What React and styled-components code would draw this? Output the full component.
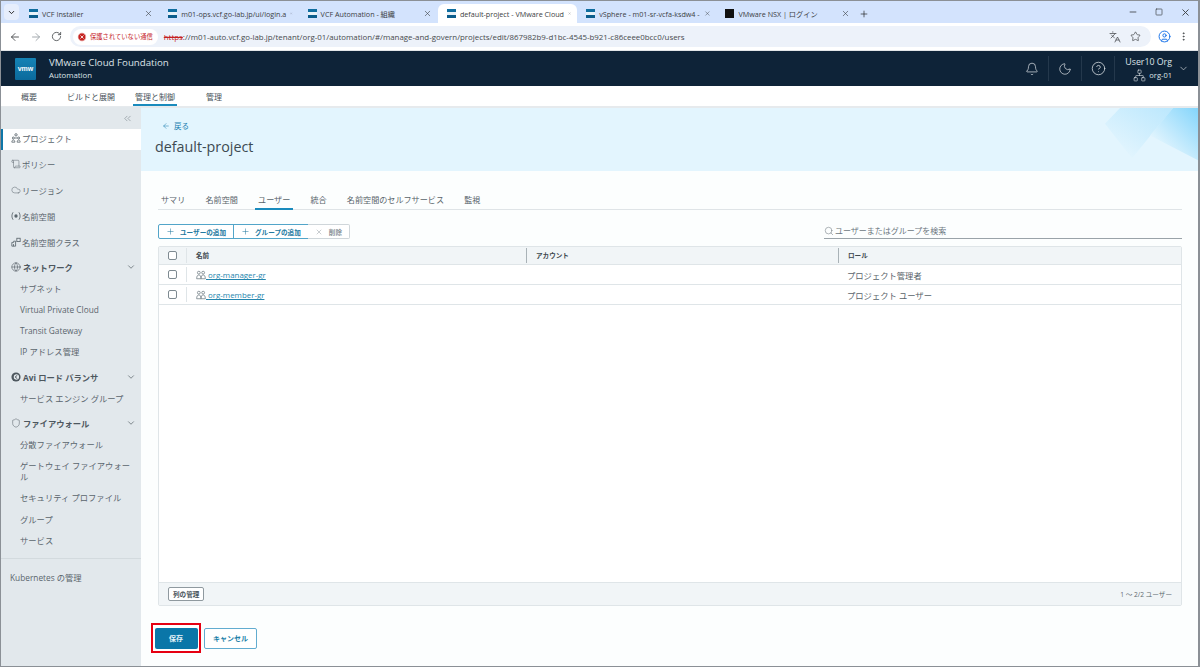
import React from 'react'
import styled, { createGlobalStyle } from 'styled-components'
import {
  ArrowLeft,
  ArrowRight,
  Bell,
  ChevronDown,
  ChevronsLeft,
  CircleHelp,
  CircleX,
  Cloud,
  Globe,
  Languages,
  Minus,
  MoreVertical,
  Moon,
  Network,
  Plus,
  RotateCw,
  Scroll,
  Search,
  Shield,
  Square,
  Star,
  UserCircle,
  X
} from 'lucide-react'

const FONT = '"Open Sans", "Noto Sans CJK JP", sans-serif'

const GlobalStyle = createGlobalStyle`
  html, body {
    margin: 0;
    height: 100%;
    overflow: hidden;
  }
  body {
    font-family: ${FONT};
    color: #454f55;
  }
  #root {
    height: 100%;
  }
  * {
    box-sizing: border-box;
  }
`

// small clarity-style icons that the packages don't have
const PeopleIcon = ({ size = 10 }) => (
  <svg width={size} height={size} viewBox="0 0 12 12" fill="none" stroke="#7a858c" strokeWidth="1">
    <circle cx="3.4" cy="3.2" r="1.7" />
    <circle cx="8.6" cy="3.2" r="1.7" />
    <path d="M0.8 10.5c0-3 1-4.6 2.6-4.6s2.6 1.6 2.6 4.6zM6 10.5c0-3 1-4.6 2.6-4.6s2.6 1.6 2.6 4.6z" />
  </svg>
)

const ProjectIcon = () => (
  <svg width="10" height="10" viewBox="0 0 12 12" fill="none" stroke="currentColor" strokeWidth="1">
    <circle cx="6" cy="2.2" r="1.4" />
    <circle cx="2.8" cy="6" r="1.2" />
    <circle cx="9.2" cy="6" r="1.2" />
    <path d="M4 6h4M1 11c0-1.6.7-2.6 1.8-2.6S4.600 9.400 4.600 11zM7.400 11c0-1.600.7-2.600 1.800-2.600S11 9.400 11 11z" />
  </svg>
)

const NamespaceIcon = () => (
  <svg width="10" height="10" viewBox="0 0 12 12" fill="none" stroke="currentColor" strokeWidth="1">
    <path d="M2.500 1.500C.6 4 .6 8 2.500 10.500M9.500 1.500c1.900 2.500 1.900 6.500 0 9" />
    <circle cx="6" cy="6" r="2" fill="currentColor" strokeWidth="0" />
  </svg>
)

const NamespaceClassIcon = () => (
  <svg width="10" height="10" viewBox="0 0 12 12" fill="none" stroke="currentColor" strokeWidth="1">
    <path d="M1 11V6.500h2.200V5h2.300v6zM3 8.500V11" />
    <rect x="7" y="1.500" width="4" height="4" />
  </svg>
)

const AviIcon = () => (
  <svg width="10" height="10" viewBox="0 0 12 12">
    <circle cx="6" cy="6" r="5.500" fill="currentColor" />
    <circle cx="6.500" cy="6" r="3.200" fill="#e2e8ec" />
    <path d="M7.500 4 5 6l2.500 2" fill="none" stroke="currentColor" strokeWidth="1.200" />
  </svg>
)

const tabs = [
  { id: 1, title: 'VCF Installer' },
  { id: 2, title: 'm01-ops.vcf.go-lab.jp/ui/login.a' },
  { id: 3, title: 'VCF Automation - 組織' },
  { id: 4, title: 'default-project - VMware Cloud', active: true },
  { id: 5, title: 'vSphere - m01-sr-vcfa-ksdw4 -' },
  { id: 6, title: 'VMware NSX | ログイン', dark: true }
]

const navItems = [
  { label: '概要', gap: 26 },
  { label: 'ビルドと展開', gap: 16 },
  { label: '管理と制御', gap: 27, active: true },
  { label: '管理', gap: 0 }
]

const sideItems = [
  { label: 'ポリシー', icon: <Scroll size={10} strokeWidth={1.2} /> },
  { label: 'リージョン', icon: <Cloud size={10} strokeWidth={1.2} /> },
  { label: '名前空間', icon: <NamespaceIcon /> },
  { label: '名前空間クラス', icon: <NamespaceClassIcon /> }
]

const sideGroups = [
  {
    label: 'ネットワーク',
    icon: <Globe size={10} strokeWidth={1.4} />,
    children: ['サブネット', 'Virtual Private Cloud', 'Transit Gateway', 'IP アドレス管理']
  },
  { label: 'Avi ロード バランサ', icon: <AviIcon />, children: ['サービス エンジン グループ'] },
  {
    label: 'ファイアウォール',
    icon: <Shield size={10} strokeWidth={1.2} />,
    children: ['分散ファイアウォール', 'ゲートウェイ ファイアウォール', 'セキュリティ プロファイル', 'グループ', 'サービス']
  }
]

const projectTabs = ['サマリ', '名前空間', 'ユーザー', '統合', '名前空間のセルフサービス', '監視']

const rows = [
  { id: 1, name: 'org-manager-gr', role: 'プロジェクト管理者' },
  { id: 2, name: 'org-member-gr', role: 'プロジェクト ユーザー' }
]

const App = () => (
  <Page>
    <GlobalStyle />
    <TabStrip>
      <TabMenu>
        <ChevronDown size={9} strokeWidth={2.5} />
      </TabMenu>
      {tabs.map(({ id, title, active, dark }) => (
        <BrowserTab key={id} $active={active}>
          <Favicon $dark={dark} />
          <TabTitle>{title}</TabTitle>
          <X size={9} strokeWidth={1.6} />
        </BrowserTab>
      ))}
      <NewTab>
        <Plus size={10} strokeWidth={1.6} />
      </NewTab>
      <WindowButtons>
        <Minus size={10} />
        <Square size={8} />
        <X size={11} />
      </WindowButtons>
    </TabStrip>

    <AddressRow>
      <NavIcons>
        <ArrowLeft size={12} strokeWidth={1.8} />
        <ArrowRight size={12} strokeWidth={1.8} color="#9aa0a6" />
        <RotateCw size={11} strokeWidth={1.8} />
      </NavIcons>
      <Omnibox>
        <Insecure>
          <CircleX size={10} strokeWidth={2} color="#fff" fill="#c5221f" />
          保護されていない通信
        </Insecure>
        <Url>
          <s>https</s>://m01-auto.vcf.go-lab.jp/tenant/org-01/automation/#/manage-and-govern/projects/edit/867982b9-d1bc-4545-b921-c86ceee0bcc0/users
        </Url>
        <Languages size={12} strokeWidth={1.5} />
        <Star size={11} strokeWidth={1.6} />
      </Omnibox>
      <UserCircle size={13} color="#1a73e8" strokeWidth={1.8} />
      <MoreVertical size={11} />
    </AddressRow>

    <Header>
      <VmwLogo>vmw</VmwLogo>
      <Brand>
        <BrandTitle>VMware Cloud Foundation</BrandTitle>
        <BrandSub>Automation</BrandSub>
      </Brand>
      <HeaderActions>
        <HeaderIcon>
          <Bell size={14} strokeWidth={1.2} />
        </HeaderIcon>
        <HeaderIcon>
          <Moon size={14} strokeWidth={1.2} />
        </HeaderIcon>
        <HeaderIcon>
          <CircleHelp size={15} strokeWidth={1.2} />
        </HeaderIcon>
        <UserBlock>
          <UserName>User10 Org</UserName>
          <UserOrg>
            <Network size={13} strokeWidth={1.1} />
            org-01
          </UserOrg>
        </UserBlock>
        <ChevronDown size={11} strokeWidth={1.4} />
      </HeaderActions>
    </Header>

    <SubNav>
      {navItems.map(({ label, gap, active }) => (
        <SubNavItem key={label} $active={active} $gap={gap}>
          {label}
        </SubNavItem>
      ))}
    </SubNav>

    <Body>
      <Sidebar>
        <Collapse>
          <ChevronsLeft size={11} strokeWidth={1.2} />
        </Collapse>
        <SideLink $active>
          <ProjectIcon />
          プロジェクト
        </SideLink>
        {sideItems.map(({ label, icon }) => (
          <SideLink key={label}>
            {icon}
            {label}
          </SideLink>
        ))}
        {sideGroups.map(({ label, icon, children }) => (
          <SideGroup key={label}>
            <GroupHead>
              {icon}
              <span>{label}</span>
              <ChevronDown size={10} strokeWidth={1.6} />
            </GroupHead>
            {children.map(child => (
              <SideChild key={child}>{child}</SideChild>
            ))}
          </SideGroup>
        ))}
        <SideFooter>Kubernetes の管理</SideFooter>
      </Sidebar>

      <Main>
        <Banner>
          <BannerArt viewBox="0 0 93 64" preserveAspectRatio="none" aria-hidden="true">
            <defs>
              <linearGradient id="artA" x1="0.15" y1="0.85" x2="0.9" y2="0">
                <stop offset="0" stopColor="#e3f5fe" />
                <stop offset="1" stopColor="#bde8fd" />
              </linearGradient>
              <linearGradient id="artB" x1="0.25" y1="0.8" x2="1" y2="0">
                <stop offset="0" stopColor="#e3f5fe" />
                <stop offset="1" stopColor="#84d5fb" />
              </linearGradient>
            </defs>
            <polygon points="0,16 15,0 68,0 27,51" fill="url(#artA)" />
            <polygon points="45,28 68,0 93,0 93,53" fill="url(#artB)" />
          </BannerArt>
          <BackLink>
            <ArrowLeft size={8} strokeWidth={1.6} />
            戻る
          </BackLink>
          <PageTitle>default-project</PageTitle>
        </Banner>

        <Content>
          <TabRow>
            {projectTabs.map(tab => (
              <ProjectTab key={tab} $active={tab === 'ユーザー'}>
                {tab}
              </ProjectTab>
            ))}
          </TabRow>

          <Toolbar>
            <ButtonGroup>
              <ToolButton>
                <Plus size={9} strokeWidth={1.4} />
                ユーザーの追加
              </ToolButton>
              <ToolButton>
                <Plus size={9} strokeWidth={1.4} />
                グループの追加
              </ToolButton>
              <ToolButton $disabled>
                <X size={8} strokeWidth={1.4} />
                削除
              </ToolButton>
            </ButtonGroup>
            <SearchBox>
              <Search size={10} strokeWidth={1.3} />
              ユーザーまたはグループを検索
            </SearchBox>
          </Toolbar>

          <Grid>
            <GridHead>
              <CheckCell>
                <CheckBox />
              </CheckCell>
              <NameCell $head>名前</NameCell>
              <AccountCell $head>アカウント</AccountCell>
              <RoleCell $head>ロール</RoleCell>
            </GridHead>
            {rows.map(({ id, name, role }) => (
              <GridRow key={id}>
                <CheckCell>
                  <CheckBox />
                </CheckCell>
                <NameCell>
                  <PeopleIcon />
                  <NameLink>&nbsp;{name}</NameLink>
                </NameCell>
                <AccountCell />
                <RoleCell>{role}</RoleCell>
              </GridRow>
            ))}
            <GridFiller />
            <GridFoot>
              <ColumnButton>列の管理</ColumnButton>
              <Count>1 ～ 2/2 ユーザー</Count>
            </GridFoot>
          </Grid>

          <Actions>
            <SaveHighlight>
              <SaveButton>保存</SaveButton>
            </SaveHighlight>
            <CancelButton>キャンセル</CancelButton>
          </Actions>
        </Content>
      </Main>
    </Body>
  </Page>
)

const Page = styled.div`
  display: flex;
  flex-direction: column;
  width: 1200px;
  height: 667px;
  overflow: hidden;
  background: #fff;
  border: 1px solid #8b9096;
  border-right-width: 2px;
`

const TabStrip = styled.div`
  display: flex;
  align-items: flex-end;
  height: 22px;
  flex: none;
  background: #d3e3fd;
  padding-left: 3px;
`

const TabMenu = styled.div`
  display: flex;
  align-items: center;
  justify-content: center;
  width: 15px;
  height: 16px;
  margin: 0 1px 3px 0;
  border-radius: 4px;
  background: #e6eefc;
  color: #1f1f1f;
`

const BrowserTab = styled.div`
  display: flex;
  align-items: center;
  gap: 4px;
  width: 139.3px;
  height: 19px;
  padding: 0 6px 0 9px;
  border-radius: 6px 6px 0 0;
  background: ${p => (p.$active ? '#fff' : 'transparent')};
  color: #3c4043;
`

const Favicon = styled.span`
  flex: none;
  width: 9px;
  height: 9px;
  background: ${p => (p.$dark ? '#111' : 'linear-gradient(#0f6d9f, #0f6d9f 30%, #e8f2f8 30%, #e8f2f8 62%, #0b5d8c 62%)')};
`

const TabTitle = styled.span`
  flex: 1;
  font-size: 7.2px;
  white-space: nowrap;
`

const NewTab = styled.div`
  display: flex;
  align-items: center;
  justify-content: center;
  width: 16px;
  height: 19px;
  color: #1f1f1f;
`

const WindowButtons = styled.div`
  display: flex;
  align-items: center;
  gap: 17px;
  height: 22px;
  margin-left: auto;
  padding-right: 7px;
  color: #3c4043;
`

const AddressRow = styled.div`
  display: flex;
  align-items: center;
  flex: none;
  height: 28px;
  padding: 0 9px 0 8px;
  gap: 7px;
  background: #fff;
  color: #474a4d;
  border-bottom: 1px solid #e2e5e8;
`

const NavIcons = styled.div`
  display: flex;
  align-items: center;
  gap: 9px;
  margin-right: 1px;
`

const Omnibox = styled.div`
  display: flex;
  align-items: center;
  flex: 1;
  height: 21px;
  padding: 0 10px 0 3px;
  gap: 9px;
  border-radius: 11px;
  background: #edf2fa;
`

const Insecure = styled.div`
  display: flex;
  align-items: center;
  gap: 3px;
  height: 16px;
  padding: 0 5px 0 4px;
  border-radius: 8px;
  background: #fff;
  color: #c5221f;
  font-size: 6.3px;
  white-space: nowrap;
`

const Url = styled.div`
  flex: 1;
  margin-left: -3px;
  font-size: 7.9px;
  color: #474a4d;
  white-space: nowrap;
  s {
    color: #c5221f;
  }
`

const Header = styled.header`
  display: flex;
  align-items: center;
  flex: none;
  height: 35px;
  padding: 0 9px 0 14px;
  background: #0e2338;
  color: #dfe4e8;
`

const VmwLogo = styled.div`
  display: flex;
  align-items: center;
  justify-content: center;
  width: 21px;
  height: 22px;
  margin-right: 13px;
  border-radius: 1px;
  background: linear-gradient(#1583b5, #0b6a9c);
  color: #fff;
  font-family: "Liberation Sans", sans-serif;
  font-size: 7px;
  font-weight: 700;
`

const Brand = styled.div`
  display: flex;
  flex-direction: column;
  margin-top: -1px;
`

const BrandTitle = styled.div`
  font-size: 9.7px;
  line-height: 14px;
`

const BrandSub = styled.div`
  font-size: 7.8px;
  line-height: 10px;
`

const HeaderActions = styled.div`
  display: flex;
  align-items: center;
  margin-left: auto;
`

const HeaderIcon = styled.div`
  display: flex;
  align-items: center;
  justify-content: center;
  width: 33px;
  height: 25px;
  border-right: 1px solid #24384c;
`

const UserBlock = styled.div`
  display: flex;
  flex-direction: column;
  align-items: flex-end;
  width: 57px;
  margin-right: 6px;
`

const UserName = styled.div`
  font-size: 8.8px;
  line-height: 13px;
`

const UserOrg = styled.div`
  display: flex;
  align-items: center;
  gap: 3px;
  font-size: 7.5px;
  line-height: 13px;
`

const SubNav = styled.nav`
  display: flex;
  flex: none;
  height: 21px;
  padding-left: 18px;
  background: #fff;
  border-bottom: 1px solid #e6eaed;
`

const SubNavItem = styled.div`
  display: flex;
  align-items: center;
  padding: 2px 2px 0;
  margin-right: ${p => p.$gap}px;
  font-size: 8px;
  color: #48525a;
  border-bottom: 2px solid ${p => (p.$active ? '#1a8bbd' : 'transparent')};
`

const Body = styled.div`
  display: flex;
  flex: 1;
  min-height: 0;
`

const Sidebar = styled.aside`
  display: flex;
  flex-direction: column;
  flex: none;
  width: 140px;
  background: #e2e8ec;
  font-size: 8.3px;
  color: #5a656c;
`

const Collapse = styled.div`
  display: flex;
  justify-content: flex-end;
  height: 22px;
  padding: 6px 8px 0 0;
  color: #6f7a82;
`

const SideLink = styled.div`
  display: flex;
  align-items: center;
  gap: 1px;
  height: ${p => (p.$active ? '21px' : '20px')};
  margin-bottom: ${p => (p.$active ? '4px' : '6px')};
  padding-left: ${p => (p.$active ? '8px' : '10px')};
  padding-bottom: ${p => (p.$active ? '3px' : '0')};
  background: ${p => (p.$active ? '#fff' : 'transparent')};
  border-left: ${p => (p.$active ? '2px solid #0e76a8' : 'none')};
`

const SideGroup = styled.div`
  display: flex;
  flex-direction: column;
  margin-bottom: 4px;
  ${SideLink} + & {
    margin-top: -1.5px;
  }
`

const GroupHead = styled.div`
  display: flex;
  align-items: center;
  gap: 2px;
  height: 21px;
  padding: 0 5px 0 10px;
  font-weight: 700;
  color: #4d575e;
  span {
    flex: 1;
  }
`

const SideChild = styled.div`
  min-height: 21.3px;
  padding: 5px 8px 5px 19px;
  line-height: 11px;
`

const SideFooter = styled.div`
  margin-top: 3px;
  padding: 11px 0 0 9px;
  border-top: 1px solid #d3dade;
  line-height: 16px;
`

const Main = styled.main`
  display: flex;
  flex-direction: column;
  flex: 1;
  min-width: 0;
`

const Banner = styled.section`
  position: relative;
  flex: none;
  height: 64px;
  padding: 12px 0 0 14px;
  background: #e3f5fe;
  border-top: 1px solid #e6eaed;
`

const BannerArt = styled.svg`
  position: absolute;
  top: 0;
  right: 0;
  width: 93px;
  height: 63px;
`

const BackLink = styled.div`
  display: flex;
  align-items: center;
  gap: 4px;
  height: 11px;
  margin-left: 7px;
  font-size: 7.5px;
  color: #1a7fb0;
`

const PageTitle = styled.h1`
  margin: 6px 0 0;
  font-size: 14.3px;
  font-weight: 400;
  line-height: 20px;
  color: #3d4a52;
`

const Content = styled.div`
  display: flex;
  flex-direction: column;
  flex: 1;
  min-height: 0;
  padding: 22px 16px 13px 17px;
  background: #fcfefe;
`

const TabRow = styled.div`
  display: flex;
  flex: none;
  height: 17px;
  gap: 14.2px;
  border-bottom: 1px solid #dfe4e7;
`

const ProjectTab = styled.div`
  height: 17px;
  padding: 0 3px;
  font-size: 8.1px;
  line-height: 14px;
  color: #58636a;
  border-bottom: 2px solid ${p => (p.$active ? '#1a8bbd' : 'transparent')};
`

const Toolbar = styled.div`
  display: flex;
  flex: none;
  justify-content: space-between;
  height: 15px;
  margin-top: 14px;
`

const ButtonGroup = styled.div`
  display: flex;
`

const ToolButton = styled.button`
  display: flex;
  align-items: center;
  gap: ${p => (p.$disabled ? '6px' : '5px')};
  height: 15px;
  padding: 0 7px;
  margin-left: -1px;
  background: #fff;
  font-family: ${FONT};
  font-size: 6.6px;
  font-weight: 700;
  color: ${p => (p.$disabled ? '#8c959b' : '#23799f')};
  border: 1px solid ${p => (p.$disabled ? '#cfd6da' : '#52a5c9')};
  &:first-child {
    margin-left: 0;
    border-radius: 2px 0 0 2px;
  }
  &:last-child {
    border-left: none;
    border-radius: 0 2px 2px 0;
  }
`

const SearchBox = styled.div`
  display: flex;
  align-items: center;
  gap: 1px;
  width: 358px;
  padding-bottom: 1px;
  font-size: 8px;
  color: #6d777e;
  border-bottom: 1px solid #9aa3a9;
`

const Grid = styled.div`
  display: flex;
  flex-direction: column;
  flex: 1;
  min-height: 0;
  margin-top: 7px;
  background: #fff;
  border: 1px solid #dfe5e8;
  border-radius: 2px;
`

const GridHead = styled.div`
  display: grid;
  grid-template-columns: 28px 339px 312px 1fr;
  align-items: center;
  flex: none;
  height: 18px;
  background: #f1f5f7;
  border-bottom: 1px solid #dfe5e8;
`

const GridRow = styled(GridHead)`
  height: 20px;
  background: #fff;
`

const CheckCell = styled.div`
  display: flex;
  align-items: center;
  justify-content: center;
  height: 15px;
  border-right: 1px solid #dfe5e8;
`

const CheckBox = styled.span`
  width: 9px;
  height: 9px;
  background: #fff;
  border: 1px solid #7e8a91;
  border-radius: 2px;
`

const bodyCell = `
  display: flex;
  align-items: center;
  height: 15px;
  padding-left: 9px;
  font-size: 8.3px;
  color: #58636a;
`

const headCell = `
  padding-bottom: 2px;
  font-size: 6.6px;
  font-weight: 700;
  color: #3e494f;
`

const NameCell = styled.div`
  ${bodyCell}
  ${p => p.$head && headCell}
`

const AccountCell = styled.div`
  ${bodyCell}
  ${p => p.$head && `${headCell} border-left: 1px solid #a9b2b7;`}
`

const RoleCell = styled(AccountCell)``

const NameLink = styled.span`
  font-size: 7.9px;
  color: #2586ae;
  text-decoration: underline;
  text-decoration-skip-ink: none;
`

const GridFiller = styled.div`
  flex: 1;
`

const GridFoot = styled.div`
  display: flex;
  align-items: center;
  justify-content: space-between;
  flex: none;
  height: 23px;
  padding: 0 9px;
  background: #f1f5f7;
  border-top: 1px solid #dfe5e8;
`

const ColumnButton = styled.button`
  height: 14px;
  padding: 0 4px;
  background: #fff;
  font-family: ${FONT};
  font-size: 6.6px;
  font-weight: 700;
  color: #47525a;
  border: 1px solid #8f999f;
  border-radius: 2px;
`

const Count = styled.span`
  font-size: 6.6px;
  color: #5d686f;
`

const Actions = styled.div`
  display: flex;
  align-items: center;
  flex: none;
  gap: 3px;
  margin: 17px 0 0 -7px;
`

const SaveHighlight = styled.div`
  padding: 2.5px 1.5px;
  background: #fff;
  border: 2px solid #e60012;
`

const SaveButton = styled.button`
  display: block;
  width: 43px;
  height: 21px;
  background: #0a76a8;
  font-family: ${FONT};
  font-size: 7px;
  font-weight: 700;
  color: #e6f3f9;
  border: none;
  border-radius: 2px;
`

const CancelButton = styled.button`
  width: 53px;
  height: 21px;
  background: #fff;
  font-family: ${FONT};
  font-size: 7px;
  font-weight: 700;
  color: #2080a8;
  border: 1px solid #62acd0;
  border-radius: 2px;
`

export default App
